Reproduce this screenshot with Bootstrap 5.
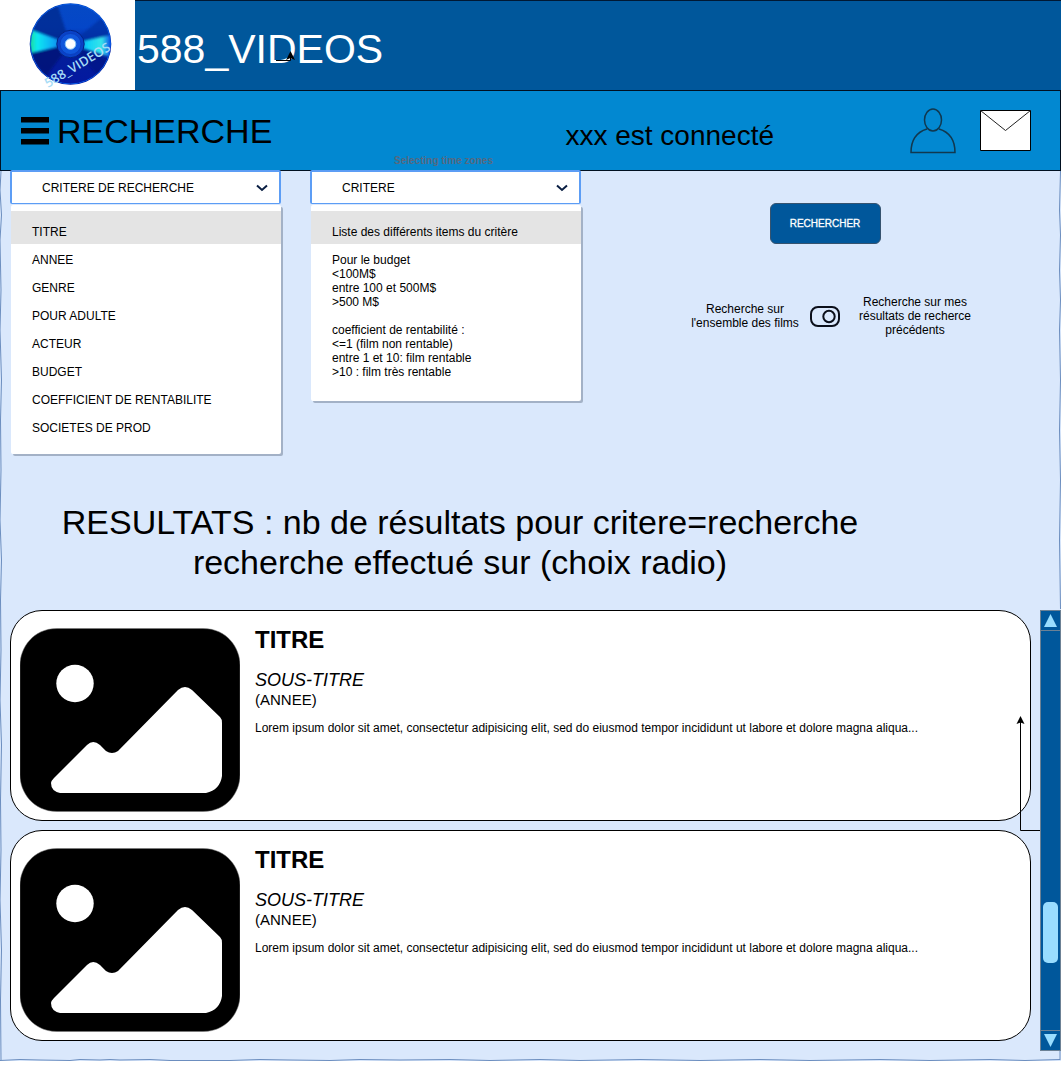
<!DOCTYPE html>
<html lang="fr">
<head>
<meta charset="utf-8">
<meta name="viewport" content="width=device-width, initial-scale=1">
<title>588_VIDEOS - Recherche</title>
<link href="https://cdn.jsdelivr.net/npm/bootstrap@5.3.0/dist/css/bootstrap.min.css" rel="stylesheet">
<style>
body{font-family:"Liberation Sans",Arial,sans-serif;font-size:12px;line-height:14px;color:#000;background:#fff}
.page-shell{background:#dae8fc;padding-bottom:10px}
.rough-edge{left:0;width:100%;height:100%;top:0;pointer-events:none}
.top-bar{background:#00579b;border-top:1px solid #001833;height:90px}
.logo-box{width:135px;height:90px;margin-top:-1px;background:#fff}
.site-name{font-size:41px;line-height:48px;color:#fff;padding:6px 0 0 2px}
.top-arrow{left:274px;top:50px}
.nav-band{background:#0288d1;border:1px solid #001021;height:81px;padding:0 29px 0 20px}
.page-title{font-size:34px;line-height:40px;font-weight:400;margin:0 0 0 8px;color:#000}
.user-state{font-size:28px;line-height:32px;padding-top:10px;margin-right:136px}
.filters{padding:0 10px;gap:29px;margin-top:-1px;min-height:332px}
.filter-col{width:271px}
.hint-label{left:0;right:0;top:-15px;font-size:10px;line-height:12px;font-weight:700;text-align:center;color:#57687f;padding-right:4px}
.form-select.filter-select{font-size:12px;line-height:14px;color:#000;height:34px;padding:8px 30px;border:2px solid #5c9df5;border-bottom-width:1px;border-radius:2px;background-color:#fff;background-image:url("data:image/svg+xml,%3Csvg xmlns='http://www.w3.org/2000/svg' viewBox='0 0 12 8'%3E%3Cpath d='M1 1.500 6 6l5-4.500' fill='none' stroke='%23091e42' stroke-width='2'/%3E%3C/svg%3E");background-size:12px 8px;background-position:right 11px center}
.choice-panel{margin:1px 0 0 1px;width:270px;background:#fff;border-radius:2px;padding:6px 0 12px;box-shadow:2px 2px 0 #a3b1c6}
.choice-panel .list-group-item{border:0;border-radius:0;background:transparent;padding:7px 21px;font-size:12px;line-height:14px;color:#000}
.choice-panel .list-group-item:first-child{background:#e4e4e4;padding-top:14px;padding-bottom:5px;margin-bottom:2px}
.choice-notes{padding-bottom:15px}
.action-col{width:310px;margin-left:60px;padding-top:33px}
.btn.search-btn{background:#00579b;border:1px solid #36536f;border-radius:6px;width:111px;height:41px;font-size:10px;line-height:12px;color:#fff;font-weight:400;padding:0;-webkit-text-stroke:.3px #fff}
.scope-row{margin-top:51px;padding-left:10px}
.scope-text{width:130px;text-align:center}
.scope-text:last-child{margin-left:10px}
.form-check-input.scope-switch{width:30px;height:21px;margin:0;border:2px solid #0b0f1a;border-radius:8px;background:transparent url("data:image/svg+xml,%3Csvg xmlns='http://www.w3.org/2000/svg' viewBox='0 0 26 17'%3E%3Ccircle cx='17' cy='8.500' r='5.700' fill='none' stroke='%230b0f1a' stroke-width='2'/%3E%3C/svg%3E") center/26px 17px no-repeat;box-shadow:none}
.result-heading{font-size:34px;line-height:40px;font-weight:400;max-width:900px;margin:0 0 28px 10px;text-align:center;color:#000}
.result-row{padding-left:10px;gap:9px}
.result-list{gap:9px}
.result-card{border:1px solid #000;border-radius:32px;background:#fff;height:211px;padding:9px;gap:15px}
.film-name{font-size:24px;line-height:40px;font-weight:700;margin:0 0 10px}
.film-sub{font-size:18px;line-height:20px;font-style:italic}
.film-year{font-size:15px;line-height:20px;margin-bottom:11px}
.link-arrow{right:20px;top:104px}
.scroll-rail{width:21px;height:441px;background:#00579b;border:1px solid #6c8195}
.rail-btn{width:19px;height:20px;background:transparent;border:0 solid #6c8195;padding:0;line-height:0}
.rail-btn:first-child{border-bottom-width:1px}
.rail-btn:last-child{border-top-width:1px}
.rail-thumb{width:15px;height:61px;border-radius:5px;background:#99ddff;margin-bottom:67px}
</style>
<script src="https://cdn.jsdelivr.net/npm/bootstrap@5.3.0/dist/js/bootstrap.bundle.min.js"></script>
</head>
<body>
<svg width="0" height="0" class="position-absolute" aria-hidden="true">
  <symbol id="film-picture" viewBox="0 0 220 184">
    <path fill="#000" stroke="#777" stroke-width=".5" d="M37 .5H183C207 .5 220 20 220 37V147C220 164 207 183.500 183 183.500H37C13 183.500 0 164 0 147V37C0 20 13 .5 37 .5Z"/>
    <circle cx="55" cy="55.500" r="18.700" fill="#fff"/>
    <path fill="#fff" d="M34 150 67 117Q73 111 80 117L86 123Q92 127 98 123L158 62Q165 56 172 62L200 89Q202 91 202 95V148Q200 162 186 165H40Q31 163 31 155Q31 153 34 150Z"/>
  </symbol>
</svg>
<div class="page-shell position-relative">
  <header class="top-bar d-flex align-items-center position-relative">
    <a href="#" class="logo-box flex-shrink-0 align-self-start" aria-label="Accueil 588_VIDEOS">
      <svg width="135" height="90" viewBox="0 0 135 90">
        <defs>
          <linearGradient id="discShade" x1="0" y1="0" x2="0" y2="1"><stop offset="0" stop-color="#0549c4"/><stop offset=".3" stop-color="#0446c8"/><stop offset=".55" stop-color="#03209a"/><stop offset="1" stop-color="#0318a0"/></linearGradient>
          <linearGradient id="glowLeft"><stop offset="0" stop-color="#16d98a"/><stop offset=".2" stop-color="#10e8f2"/><stop offset=".6" stop-color="#08a8f5"/><stop offset="1" stop-color="#0545c8"/></linearGradient>
          <linearGradient id="glowRight"><stop offset="0" stop-color="#0545c8"/><stop offset=".4" stop-color="#10d0f8"/><stop offset=".75" stop-color="#35e5e8"/><stop offset="1" stop-color="#0530e8"/></linearGradient>
          <filter id="soft"><feGaussianBlur stdDeviation="1.200"/></filter>
          <clipPath id="discEdge"><circle cx="70.500" cy="44" r="40.300"/></clipPath>
        </defs>
        <circle cx="70.500" cy="44" r="40.800" fill="url(#discShade)"/>
        <g clip-path="url(#discEdge)">
          <g filter="url(#soft)">
            <path d="M70 44 56 0 28 14 31 29Z" fill="#022a8c" opacity=".75"/>
            <path d="M70 44 112 34 104 16Z" fill="#0230a0" opacity=".7"/>
            <path d="M70 44 31 30Q27 42 31 53Z" fill="url(#glowLeft)"/>
            <path d="M70 44 111 35Q114 45 110 57Z" fill="url(#glowRight)"/>
            <path d="M70 44 31 54 45 78Z" fill="#020f70" opacity=".7"/>
            <path d="M70 44 98 76 108 60Z" fill="#020f80" opacity=".6"/>
          </g>
          <circle cx="70.500" cy="44" r="40" fill="none" stroke="#0a5ee8" stroke-width="1"/>
        </g>
        <circle cx="70.500" cy="44" r="13.700" fill="#0942c7" stroke="#032384"/>
        <circle cx="70.500" cy="44" r="10.500" fill="#1057dc" stroke="#0a39b5" stroke-width=".7"/>
        <circle cx="70.500" cy="44" r="5.300" fill="#fff" stroke="#84c5f8"/>
        <text transform="translate(48 88) rotate(-31)" font-family="Open Sans, sans-serif" font-size="13" font-weight="600" fill="#a6dcf6">588_VIDEOS</text>
      </svg>
    </a>
    <div class="site-name">588_VIDEOS</div>
    <svg class="top-arrow position-absolute" width="22" height="12" viewBox="0 0 22 12" aria-hidden="true"><path d="M2 9.500H16.500V4" fill="none" stroke="#000"/><path d="M16.500 0 21 9 16.500 7 12 9Z"/></svg>
  </header>
  <nav class="nav-band d-flex align-items-center">
    <button type="button" class="btn p-0 border-0 rounded-0 lh-1" aria-label="Menu"><svg class="d-block" width="28" height="28" viewBox="0 0 28 28"><path d="M0 0H28V5.500H0ZM0 11H28V16.500H0ZM0 22H28V27.500H0Z"/></svg></button>
    <h1 class="page-title">RECHERCHE</h1>
    <div class="user-state ms-auto">xxx est connecté</div>
    <a href="#" aria-label="Profil"><svg class="d-block" width="46" height="46" viewBox="0 0 46 46" fill="none" stroke="#11384f" stroke-width="1.500"><ellipse cx="23" cy="12" rx="8.500" ry="11"/><path d="M17 21C7 24 1 31 1 44.500H45C45 31 39 24 29 21"/></svg></a>
    <a href="#" class="ms-4" aria-label="Messages"><svg class="d-block" width="51" height="42" viewBox="0 0 51 42"><path d="M.5.500H50.500V40.500H.5Z" fill="#fff" stroke="#000"/><path d="M.5.500 25.500 20.500 50.500.500" fill="none" stroke="#222"/></svg></a>
  </nav>
  <form class="filters d-flex align-items-start">
    <div class="filter-col flex-shrink-0">
      <select class="form-select filter-select" aria-label="Critère de recherche"><option>CRITERE DE RECHERCHE</option></select>
      <div class="list-group choice-panel">
        <button type="button" class="list-group-item list-group-item-action">TITRE</button>
        <button type="button" class="list-group-item list-group-item-action">ANNEE</button>
        <button type="button" class="list-group-item list-group-item-action">GENRE</button>
        <button type="button" class="list-group-item list-group-item-action">POUR ADULTE</button>
        <button type="button" class="list-group-item list-group-item-action">ACTEUR</button>
        <button type="button" class="list-group-item list-group-item-action">BUDGET</button>
        <button type="button" class="list-group-item list-group-item-action">COEFFICIENT DE RENTABILITE</button>
        <button type="button" class="list-group-item list-group-item-action">SOCIETES DE PROD</button>
      </div>
    </div>
    <div class="filter-col flex-shrink-0 position-relative">
      <label class="hint-label position-absolute" for="critere">Selecting time zones</label>
      <select id="critere" class="form-select filter-select"><option>CRITERE</option></select>
      <div class="list-group choice-panel choice-notes">
        <div class="list-group-item">Liste des différents items du critère</div>
        <div class="list-group-item">Pour le budget<br>&lt;100M$<br>entre 100 et 500M$<br>&gt;500 M$<br><br>coefficient de rentabilité :<br>&lt;=1 (film non rentable)<br>entre 1 et 10: film rentable<br>&gt;10 : film très rentable</div>
      </div>
    </div>
    <div class="action-col d-flex flex-column align-items-center">
      <button type="button" class="btn search-btn">RECHERCHER</button>
      <div class="scope-row d-flex align-items-center">
        <label class="scope-text" for="portee">Recherche sur l'ensemble des films</label>
        <input id="portee" class="form-check-input scope-switch flex-shrink-0" type="checkbox" role="switch">
        <label class="scope-text px-2" for="portee">Recherche sur mes résultats de recherce précédents</label>
      </div>
    </div>
  </form>
  <main>
    <h2 class="result-heading">RESULTATS : nb de résultats pour critere=recherche recherche effectué sur (choix radio)</h2>
    <div class="result-row d-flex position-relative">
      <div class="result-list d-flex flex-column flex-grow-1">
        <article class="result-card d-flex">
          <svg class="flex-shrink-0 mt-2" width="220" height="184" role="img" aria-label="Affiche"><use href="#film-picture"/></svg>
          <div>
            <h3 class="film-name">TITRE</h3>
            <div class="film-sub">SOUS-TITRE</div>
            <div class="film-year">(ANNEE)</div>
            <p class="m-0">Lorem ipsum dolor sit amet, consectetur adipisicing elit, sed do eiusmod tempor incididunt ut labore et dolore magna aliqua...</p>
          </div>
        </article>
        <article class="result-card d-flex">
          <svg class="flex-shrink-0 mt-2" width="220" height="184" role="img" aria-label="Affiche"><use href="#film-picture"/></svg>
          <div>
            <h3 class="film-name">TITRE</h3>
            <div class="film-sub">SOUS-TITRE</div>
            <div class="film-year">(ANNEE)</div>
            <p class="m-0">Lorem ipsum dolor sit amet, consectetur adipisicing elit, sed do eiusmod tempor incididunt ut labore et dolore magna aliqua...</p>
          </div>
        </article>
      </div>
      <svg class="link-arrow position-absolute" width="26" height="118" viewBox="0 0 26 118" aria-hidden="true"><path d="M26 116.500H5.500V6" fill="none" stroke="#000"/><path d="M5.500 2 9.500 10 5.500 8.500 1.500 10Z"/></svg>
      <div class="scroll-rail d-flex flex-column align-items-center flex-shrink-0 position-relative">
        <button type="button" class="rail-btn" aria-label="Monter"><svg width="13" height="13" viewBox="0 0 13 13"><path d="M6.500 0 13 13H0Z" fill="#99ddff"/></svg></button>
        <div class="rail-thumb mt-auto"></div>
        <button type="button" class="rail-btn" aria-label="Descendre"><svg width="13" height="13" viewBox="0 0 13 13"><path d="M0 0H13L6.500 13Z" fill="#99ddff"/></svg></button>
      </div>
    </div>
  </main>
  <svg class="rough-edge position-absolute" viewBox="0 0 1061 1061" preserveAspectRatio="none" fill="none" stroke="#6c8ebf" stroke-width="1" aria-hidden="true">
    <path d="M1 171 0 190 1.500 215 0 240 1 290 0 330 1.500 380 .5 420 1 470 0 520 1.500 560 .5 600 1 650 0 700 1.500 745 .5 800 1 850 0 900 1.500 950 .5 1000 1 1060"/>
    <path d="M1060.500 171 1059.500 210 1060.500 235 1059.500 270 1060.500 300 1059.500 330 1060.500 380 1059.500 430 1060.500 480 1059.500 540 1060.500 609M1060 1051V1060"/>
    <path d="M0 1060.500 20 1059.500 40 1060 70 1060.500 80 1059.500 100 1060 110 1059.500 120 1060 150 1059.500 170 1060.500 230 1060.500 260 1059.500 290 1060 330 1060.500 360 1059.500 400 1060 450 1059.500 490 1060.500 540 1059.500 580 1060.500 640 1059.500 700 1060.500 760 1059.500 810 1060.500 880 1059.500 930 1060.500 990 1059.500 1025 1060.500 1060 1059.500"/>
  </svg>
</div>
</body>
</html>
